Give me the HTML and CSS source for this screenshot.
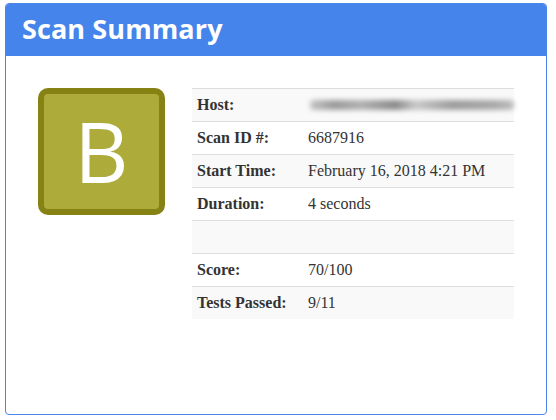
FILE: index.html
```html
<!DOCTYPE html>
<html>
<head>
<meta charset="utf-8">
<link rel="stylesheet" href="styles.css">
</head>
<body>
<div class="panel">
  <div class="panel-heading"><h1 class="title">Scan Summary</h1></div>
  <div class="panel-body">
    <div class="grade-col">
      <div class="grade">B</div>
    </div>
    <table class="summary">
      <tr><th>Host:</th><td><span class="blur"></span></td></tr>
      <tr><th>Scan ID #:</th><td>6687916</td></tr>
      <tr><th>Start Time:</th><td>February 16, 2018 4:21 PM</td></tr>
      <tr><th>Duration:</th><td>4 seconds</td></tr>
      <tr><th>&nbsp;</th><td></td></tr>
      <tr><th>Score:</th><td>70/100</td></tr>
      <tr><th>Tests Passed:</th><td>9/11</td></tr>
    </table>
  </div>
</div>
</body>
</html>
```
FILE: styles.css
```css
html, body { margin: 0; padding: 0; background: #fff; }
body { padding: 3px 9px 0 5px; font-family: "Liberation Serif", serif; color: #333; }
.panel {
  border: 1px solid #4a86e8;
  border-radius: 4px;
  height: 412px;
  box-sizing: border-box;
  overflow: hidden;
}
.panel-heading {
  background: #4584ea;
  height: 52px;
  padding: 0 16px;
  display: flex;
  align-items: center;
}
.title {
  margin: 0;
  font-family: "Open Sans", sans-serif;
  font-weight: 700;
  font-size: 27px;
  color: #fff;
  letter-spacing: 0.1px;
  position: relative;
  top: -2px;
}
.panel-body {
  display: flex;
  padding: 32px 0 0 32px;
}
.grade-col { width: 154px; }
.grade {
  width: 127px;
  height: 127px;
  box-sizing: border-box;
  border: 6px solid #868213;
  border-radius: 10px;
  background: #adac3a;
  color: #fff;
  font-family: "Open Sans", sans-serif;
  font-weight: 400;
  font-size: 84px;
  line-height: 114px;
  text-align: center;
}
.summary {
  width: 322px;
  table-layout: fixed;
  border-collapse: collapse;
  font-size: 16px;
}
.summary th, .summary td {
  border-top: 1px solid #ddd;
  height: 32px;
  padding: 0 5px;
  text-align: left;
  vertical-align: middle;
  white-space: nowrap;
}
.summary th { width: 101px; font-weight: 700; }
.summary tr:nth-child(odd) { background: #f9f9f9; }
.blur {
  display: block;
  height: 10px;
  width: 204px;
  margin-left: 2px;
  background: linear-gradient(90deg, #c4c4c4 0%, #9a9a9a 12%, #b0b0b0 25%, #8a8a8a 42%, #c8c8c8 52%, #9c9c9c 70%, #a8a8a8 90%, #bdbdbd 100%);
  filter: blur(2.5px);
  border-radius: 4px;
}
```
